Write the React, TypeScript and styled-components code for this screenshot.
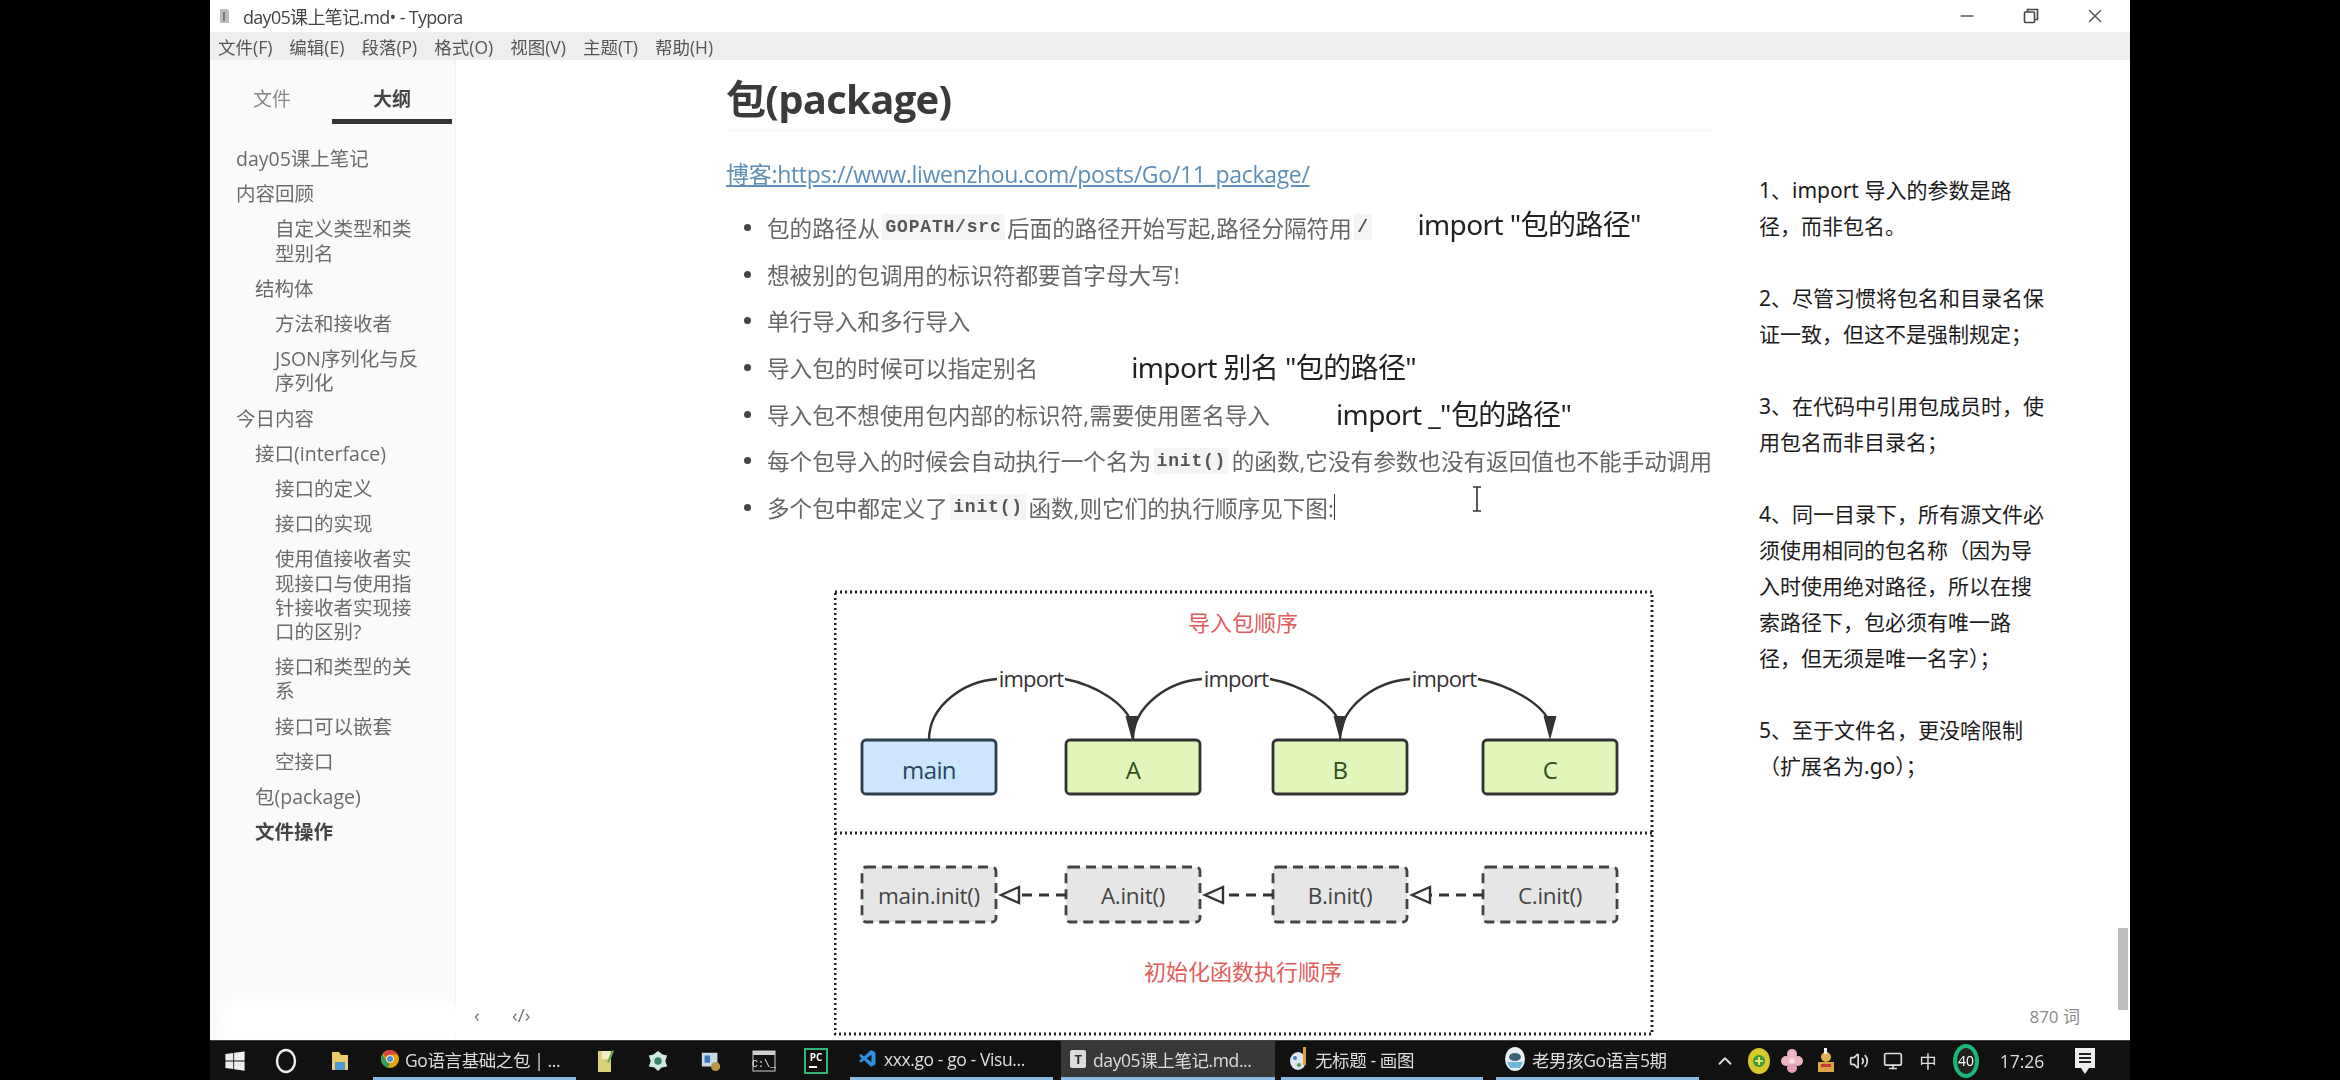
import React from "react";
import styled, { createGlobalStyle } from "styled-components";
import { X, Minus, ChevronUp, Volume2, Monitor } from "lucide-react";
import { FaWindows } from "react-icons/fa";
import { VscVscode } from "react-icons/vsc";

const Global = createGlobalStyle`
  html, body { margin: 0; background: #000; overflow: hidden; }
  * { box-sizing: border-box; }
`;
const sans = `"Open Sans", "Noto Sans CJK SC", sans-serif`;
const yahei = `"Noto Sans", "Noto Sans CJK SC", sans-serif`;

const Page = styled.div`
  width: 2340px; height: 1080px; background: #000; padding-left: 210px;
`;
const Desktop = styled.div`
  width: 1920px; height: 1080px; display: flex; flex-direction: column;
`;
const Win = styled.div`
  height: 1040px; background: #fff; display: flex; flex-direction: column; position: relative; overflow: hidden;
`;
const TitleBar = styled.div`
  height: 32px; flex: none; display: flex; align-items: center; padding-left: 8px;
  font: 18px ${sans}; color: #444; filter: blur(.5px);
`;
const DocIcon = styled.svg` width: 12px; height: 16px; margin-right: 13px; `;
const TitleText = styled.div` flex: 1; letter-spacing: -.7px; `;
const Ctrl = styled.div`
  width: 64px; display: flex; justify-content: center; align-items: center; color: #555;
`;
const ControlGroup = styled.div` display: flex; margin-right: 3px; `;
const MenuBar = styled.div`
  height: 28px; flex: none; background: #eeeeee; display: flex; align-items: center; gap: 17px; padding-left: 8px;
  font: 17.5px ${sans}; color: #555; filter: blur(.5px);
`;
const MenuItem = styled.span` white-space: nowrap; `;
const Body = styled.div` flex: 1; display: flex; min-height: 0; `;
const Sidebar = styled.aside`
  width: 246px; flex: none; background: #fafafa; border-right: 1px solid #eeeeee; filter: blur(.5px);
`;
const Tabs = styled.div` display: flex; height: 64px; padding-left: 2px; `;
const Tab = styled.div<{ $active?: boolean }>`
  width: 120px; padding-top: 17px; display: flex; justify-content: center; align-items: center;
  font: 19px ${sans}; color: ${p => (p.$active ? "#444" : "#888")};
  font-weight: ${p => (p.$active ? 600 : 400)};
  border-bottom: 5px solid ${p => (p.$active ? "#333" : "transparent")};
`;
const Outline = styled.div` display: flex; flex-direction: column; gap: 11px; padding-top: 23px; `;
const OutlineItem = styled.div<{ $level: number; $bold?: boolean }>`
  margin-left: ${p => [26, 45, 65][p.$level]}px;
  width: ${p => (p.$level === 2 ? "150px" : "190px")};
  font: ${p => (p.$bold ? 700 : 400)} 19.5px/24.2px ${sans};
  color: ${p => (p.$bold ? "#444" : "#6b6b6b")};
  word-break: break-all;
`;
const Editor = styled.main` flex: 1; display: flex; position: relative; min-width: 0; `;
const Article = styled.article`
  width: 1303px; flex: none; padding: 9px 0 0 270px; filter: blur(.55px);
`;
const Heading = styled.h1`
  margin: 0; height: 62px; font: 700 40px/60px ${sans}; color: #3a3a3a; letter-spacing: -.7px;
  border-bottom: 1px solid #f6f6f6; width: 990px;
`;
const Blog = styled.a`
  display: block; margin-top: 28px; height: 30px; font: 23px/30px ${sans}; color: #5f8fb8;
  text-decoration: underline; letter-spacing: -.3px; white-space: nowrap;
`;
const List = styled.ul` list-style: none; margin: 15px 0 0; padding: 0; `;
const Item = styled.li`
  height: 46.7px; display: flex; align-items: center; position: relative; padding-left: 41px;
  font: 22.6px ${sans}; color: #666; white-space: nowrap;
`;
const Dot = styled.span`
  position: absolute; left: 18px; top: 20px; width: 7px; height: 7px; border-radius: 50%; background: #444;
`;
const Code = styled.code`
  font: 600 18px "Liberation Mono", monospace; background: #f3f4f4; color: #555; padding: 3px 3px; margin: 0 2.5px; letter-spacing: .8px;
`;
const Caret = styled.span` display: inline-block; width: 1.5px; height: 26px; background: #333; vertical-align: middle; `;
const Annotation = styled.span<{ $gap: number; $lift: number }>`
  margin-left: ${p => p.$gap}px; margin-bottom: ${p => p.$lift}px; font: 28px ${yahei}; color: #222; letter-spacing: -.6px;
`;
const DiagramBox = styled.svg` display: block; margin: 58px 0 0 108px; width: 820px; height: 448px; `;
const Notes = styled.aside`
  flex: none; width: 300px; padding-top: 112px; display: flex; flex-direction: column; gap: 36px;
  font: 21px/36px ${yahei}; color: #1c1c1c;
`;
const Para = styled.p` margin: 0; white-space: nowrap; `;
const WordCount = styled.div`
  position: absolute; right: 50px; bottom: 12px; font: 17px ${sans}; color: #8a8a8a;
`;
const ScrollThumb = styled.div`
  position: absolute; right: 2px; top: 868px; width: 10px; height: 82px; background: #bdbdbd;
`;
const FooterGlyph = styled.span<{ $x: number }>`
  position: absolute; left: ${p => p.$x}px; bottom: 12px; font: 19px ${sans}; color: #777; z-index: 2;
`;
const MouseBeam = styled.svg` position: absolute; left: 1016px; top: 426px; width: 10px; height: 26px; `;
const Watermark = styled.div`
  position: absolute; left: 15px; bottom: 0; width: 240px; height: 36px; background: #fff; filter: blur(7px);
`;
const Taskbar = styled.footer`
  height: 40px; flex: none; background: #111; display: flex; align-items: stretch; filter: blur(.4px);
  font: 17.5px ${sans}; color: #ddd; border-top: 1px solid #444;
`;
const Slot = styled.div<{ $w: number; $ml?: number }>`
  width: ${p => p.$w}px; margin-left: ${p => p.$ml ?? 0}px; flex: none; display: flex; align-items: center; justify-content: center;
`;
const TaskTab = styled.div<{ $w: number; $ml: number; $active?: boolean }>`
  width: ${p => p.$w}px; margin-left: ${p => p.$ml}px; flex: none; display: flex; align-items: center; gap: 6px;
  padding-left: 8px; white-space: nowrap; letter-spacing: -.4px; border-bottom: 3px solid #8abbe4;
  background: ${p => (p.$active ? "#383838" : "transparent")};
`;
const Tray = styled.div` display: flex; align-items: stretch; margin-left: 8px; `;
const Clock = styled.span` font: 17.5px ${sans}; color: #ddd; `;
const Badge = styled.div`
  width: 26px; height: 34px; border-radius: 50%; border: 4px solid #18b878; color: #fff; background: #222;
  font: 14px ${sans}; display: flex; align-items: center; justify-content: center;
`;

const outline: [number, string, boolean?][] = [
  [0, "day05课上笔记"], [0, "内容回顾"], [2, "自定义类型和类型别名"], [1, "结构体"], [2, "方法和接收者"],
  [2, "JSON序列化与反序列化"], [0, "今日内容"], [1, "接口(interface)"], [2, "接口的定义"], [2, "接口的实现"],
  [2, "使用值接收者实现接口与使用指针接收者实现接口的区别?"], [2, "接口和类型的关系"], [2, "接口可以嵌套"], [2, "空接口"],
  [1, "包(package)"], [1, "文件操作", true],
];
const menus = ["文件(F)", "编辑(E)", "段落(P)", "格式(O)", "视图(V)", "主题(T)", "帮助(H)"];
const notes = [
  ["1、import 导入的参数是路", "径，而非包名。"],
  ["2、尽管习惯将包名和目录名保", "证一致，但这不是强制规定；"],
  ["3、在代码中引用包成员时，使", "用包名而非目录名；"],
  ["4、同一目录下，所有源文件必", "须使用相同的包名称（因为导", "入时使用绝对路径，所以在搜", "索路径下，包必须有唯一路", "径，但无须是唯一名字）；"],
  ["5、至于文件名，更没啥限制", "（扩展名为.go）；"],
];

const boxes = [
  { x: 862, label: "main", fill: "#cde5fd", stroke: "#2b3f50", ink: "#25485f" },
  { x: 1066, label: "A", fill: "#e2f5bb", stroke: "#333", ink: "#2c4f22" },
  { x: 1273, label: "B", fill: "#e2f5bb", stroke: "#333", ink: "#2c4f22" },
  { x: 1483, label: "C", fill: "#e2f5bb", stroke: "#333", ink: "#2c4f22" },
];
const inits = [
  { x: 862, label: "main.init()" }, { x: 1066, label: "A.init()" },
  { x: 1273, label: "B.init()" }, { x: 1483, label: "C.init()" },
];
const arcs = [
  { from: 929, to: 1132, label: 1031 },
  { from: 1133, to: 1340, label: 1236 },
  { from: 1340, to: 1550, label: 1444 },
];

const Diagram = () => (
  <DiagramBox viewBox="834 590 820 448" fontFamily={`"Open Sans", "Noto Sans CJK SC", sans-serif`}>
    <rect x={835} y={593} width={817} height={442} fill="#fff" stroke="#222" strokeWidth={3} strokeDasharray="2 3" />
    <line x1={835} y1={834} x2={1652} y2={834} stroke="#222" strokeWidth={3} strokeDasharray="2 3" />
    <text x={1243} y={632} textAnchor="middle" fontSize={22} fill="#e25c5c">导入包顺序</text>
    <text x={1243} y={981} textAnchor="middle" fontSize={22} fill="#e25c5c">初始化函数执行顺序</text>
    {arcs.map(a => (
      <g key={a.label}>
        <path d={`M${a.from} 741 C${a.from} 705 ${a.label - 65} 682 ${a.label - 34} 680`} fill="none" stroke="#333" strokeWidth={2.4} />
        <path d={`M${a.label + 34} 680 C${a.label + 65} 686 ${a.to - 6} 705 ${a.to} 725`} fill="none" stroke="#333" strokeWidth={2.4} />
        <polygon points={`${a.to},741 ${a.to - 6.5},717 ${a.to + 6.5},717`} fill="#333" />
        <text x={a.label} y={688} textAnchor="middle" fontSize={22} fill="#333" letterSpacing={-0.8}>import</text>
      </g>
    ))}
    {boxes.map(b => (
      <g key={b.label}>
        <rect x={b.x} y={741} width={134} height={54} rx={4} fill={b.fill} stroke={b.stroke} strokeWidth={2.8} />
        <text x={b.x + 67} y={780} textAnchor="middle" fontSize={24} fill={b.ink} letterSpacing={-0.6}>{b.label}</text>
      </g>
    ))}
    {inits.map((b, i) => (
      <g key={b.label}>
        <rect x={b.x} y={868} width={134} height={55} rx={4} fill="#e6e6e6" stroke="#444" strokeWidth={2.8} strokeDasharray="10 6" />
        <text x={b.x + 67} y={905} textAnchor="middle" fontSize={22.5} fill="#444" letterSpacing={-0.3}>{b.label}</text>
        {i > 0 && (
          <g>
            <line x1={b.x} y1={896} x2={inits[i - 1].x + 154} y2={896} stroke="#333" strokeWidth={2.8} strokeDasharray="10 7" />
            <polygon points={`${inits[i - 1].x + 139},896 ${inits[i - 1].x + 157},888 ${inits[i - 1].x + 157},904`} fill="#fff" stroke="#333" strokeWidth={2.4} />
          </g>
        )}
      </g>
    ))}
  </DiagramBox>
);

const ChromeIcon = () => (
  <svg width="18" height="18" viewBox="0 0 24 24">
    <circle cx="12" cy="12" r="12" fill="#e5a50a" />
    <path d="M12 0a12 12 0 0 1 10.4 6H12a6 6 0 0 0-5.5 3.6L2.4 4.4A12 12 0 0 1 12 0z" fill="#d9453a" />
    <path d="M1.9 5.5l5 7.6a6 6 0 0 0 5.6 5L9.2 23.7A12 12 0 0 1 1.9 5.5z" fill="#3b9e4e" />
    <circle cx="12" cy="12" r="5" fill="#fff" /><circle cx="12" cy="12" r="4" fill="#4a8de0" />
  </svg>
);
const Folder = () => (
  <svg width="20" height="24" viewBox="0 0 20 24">
    <path d="M2 3h7l2 3h7v15H2z" fill="#eccb6a" /><rect x="5" y="13" width="10" height="8" fill="#4a9ad8" />
  </svg>
);
const Notepad = () => (
  <svg width="20" height="26" viewBox="0 0 20 26">
    <rect x="3" y="3" width="13" height="21" fill="#d9d27a" /><path d="M7 3h9v8H7z" fill="#f2efc8" /><path d="M17 2l2 1-5 12-2-1z" fill="#6aa84f" />
  </svg>
);
const Gem = () => (
  <svg width="22" height="24" viewBox="0 0 24 24">
    <path d="M12 1l5 4 5 1-2 6 2 6-6 1-4 4-4-4-6-1 2-6-2-6 5-1z" fill="#cfe9df" /><circle cx="12" cy="12" r="4" fill="#35806e" />
  </svg>
);
const Utility = () => (
  <svg width="22" height="24" viewBox="0 0 24 24">
    <rect x="2" y="3" width="17" height="15" fill="#c9d8e6" /><rect x="5" y="6" width="6" height="8" fill="#3c78b5" /><circle cx="17" cy="18" r="5" fill="#b8964a" />
  </svg>
);
const Cmd = () => (
  <svg width="24" height="24" viewBox="0 0 24 24" fontFamily="Liberation Mono">
    <rect x="1" y="2" width="22" height="20" fill="#111" stroke="#cfcfcf" /><rect x="1" y="2" width="22" height="4" fill="#cfcfcf" />
    <text x="12" y="18" fontSize="10" fill="#eee" textAnchor="middle">C:\_</text>
  </svg>
);
const PyCharm = () => (
  <svg width="24" height="26" viewBox="0 0 24 26" fontFamily="Open Sans">
    <rect x="1" y="1" width="22" height="24" fill="#111" stroke="#2fb574" strokeWidth="2" />
    <text x="12" y="13" fontSize="10" fontWeight="700" fill="#fff" textAnchor="middle">PC</text><rect x="5" y="18" width="8" height="2" fill="#fff" />
  </svg>
);
const TyporaIcon = () => (
  <svg width="18" height="20" viewBox="0 0 18 20" fontFamily="Open Sans">
    <rect x="1" y="1" width="16" height="18" rx="2" fill="#dcdcdc" /><text x="9" y="15" fontSize="13" fontWeight="700" fill="#333" textAnchor="middle">T</text>
  </svg>
);
const PaintIcon = () => (
  <svg width="20" height="26" viewBox="0 0 20 26">
    <ellipse cx="9" cy="15" rx="8" ry="9" fill="#dbe6ef" /><circle cx="6" cy="12" r="2" fill="#3a7fc4" /><circle cx="10" cy="19" r="2" fill="#4c9c55" />
    <rect x="14" y="1" width="3" height="18" fill="#e29b3c" />
  </svg>
);
const ObsIcon = () => (
  <svg width="22" height="26" viewBox="0 0 22 26">
    <ellipse cx="11" cy="13" rx="10" ry="12" fill="#e8f0f4" /><ellipse cx="11" cy="11" rx="6" ry="4" fill="#3f5f72" /><path d="M3 16h16l-3 6H6z" fill="#6db7dd" />
  </svg>
);
const Shield = () => (
  <svg width="24" height="28" viewBox="0 0 24 28">
    <ellipse cx="12" cy="14" rx="11" ry="13" fill="#d7c92a" /><circle cx="12" cy="14" r="6" fill="#3c9a3c" /><path d="M12 10v8M8 14h8" stroke="#e9e36a" strokeWidth="2" />
  </svg>
);
const Flower = () => (
  <svg width="22" height="26" viewBox="0 0 22 26">
    <circle cx="11" cy="6" r="5" fill="#eeb4c2" /><circle cx="5" cy="13" r="5" fill="#eeb4c2" /><circle cx="17" cy="13" r="5" fill="#eeb4c2" /><circle cx="11" cy="20" r="5" fill="#e8a0b2" /><circle cx="11" cy="13" r="3" fill="#f7dce2" />
  </svg>
);
const Squirrel = () => (
  <svg width="22" height="26" viewBox="0 0 22 26">
    <rect x="3" y="14" width="16" height="10" fill="#d9a441" /><circle cx="11" cy="9" r="5" fill="#e2b04f" /><path d="M9 0h3v6H9z" fill="#eee" /><rect x="6" y="16" width="10" height="3" fill="#c6372d" />
  </svg>
);
const Notification = () => (
  <svg width="24" height="30" viewBox="0 0 24 30">
    <path d="M2 2h20v20h-6l-4 6-4-6H2z" fill="#eee" /><path d="M6 8h12M6 12h12M6 16h12" stroke="#222" strokeWidth="2" />
  </svg>
);

export default function App() {
  return (
    <Page>
      <Global />
      <Desktop>
        <Win>
          <TitleBar>
            <DocIcon viewBox="0 0 12 16"><path d="M2 1h7l2 2v12H2z" fill="#bbb" /><path d="M5 4h2v9H5z" fill="#777" /></DocIcon>
            <TitleText>day05课上笔记.md• - Typora</TitleText>
            <ControlGroup>
              <Ctrl><Minus size={20} strokeWidth={2} /></Ctrl>
              <Ctrl>
                <svg width="16" height="16" viewBox="0 0 16 16" fill="none" stroke="#444" strokeWidth="1.6">
                  <rect x="1.5" y="4" width="10" height="10.5" rx="1" /><path d="M4.5 4V1.5h10v10H11.5" />
                </svg>
              </Ctrl>
              <Ctrl><X size={22} strokeWidth={1.6} /></Ctrl>
            </ControlGroup>
          </TitleBar>
          <MenuBar>{menus.map(m => <MenuItem key={m}>{m}</MenuItem>)}</MenuBar>
          <Body>
            <Sidebar>
              <Tabs><Tab>文件</Tab><Tab $active>大纲</Tab></Tabs>
              <Outline>
                {outline.map(([lvl, text, bold]) => (
                  <OutlineItem key={text} $level={lvl} $bold={bold}>{text}</OutlineItem>
                ))}
              </Outline>
            </Sidebar>
            <Editor>
              <Article>
                <Heading>包(package)</Heading>
                <Blog>博客:https://www.liwenzhou.com/posts/Go/11_package/</Blog>
                <List>
                  <Item><Dot />包的路径从<Code>GOPATH/src</Code>后面的路径开始写起,路径分隔符用<Code>/</Code><Annotation $gap={43} $lift={8}>import "包的路径"</Annotation></Item>
                  <Item><Dot />想被别的包调用的标识符都要首字母大写!</Item>
                  <Item><Dot />单行导入和多行导入</Item>
                  <Item><Dot />导入包的时候可以指定别名<Annotation $gap={93} $lift={2}>import 别名 "包的路径"</Annotation></Item>
                  <Item><Dot />导入包不想使用包内部的标识符,需要使用匿名导入<Annotation $gap={66} $lift={2}>import _"包的路径"</Annotation></Item>
                  <Item><Dot />每个包导入的时候会自动执行一个名为<Code>init()</Code>的函数,它没有参数也没有返回值也不能手动调用</Item>
                  <Item><Dot />多个包中都定义了<Code>init()</Code>函数,则它们的执行顺序见下图:<Caret /></Item>
                </List>
                <Diagram />
              </Article>
              <Notes>
                {notes.map(lines => (
                  <Para key={lines[0]}>{lines.map(l => <React.Fragment key={l}>{l}<br /></React.Fragment>)}</Para>
                ))}
              </Notes>
              <FooterGlyph $x={18}>‹</FooterGlyph>
              <FooterGlyph $x={56}>‹/›</FooterGlyph>
              <WordCount>870 词</WordCount>
              <ScrollThumb />
              <MouseBeam viewBox="0 0 10 26"><path d="M1 1h8M5 1v24M1 25h8" stroke="#333" strokeWidth="1.6" fill="none" /></MouseBeam>
            </Editor>
          </Body>
          <Watermark />
        </Win>
        <Taskbar>
          <Slot $w={50}><FaWindows size={22} color="#eee" /></Slot>
          <Slot $w={52}><svg width="22" height="26" viewBox="0 0 22 26"><ellipse cx="11" cy="13" rx="9" ry="11" fill="none" stroke="#eee" strokeWidth="2.4" /></svg></Slot>
          <Slot $w={56}><Folder /></Slot>
          <TaskTab $w={203} $ml={5}><ChromeIcon />Go语言基础之包 | ...</TaskTab>
          <Slot $w={52} $ml={3}><Notepad /></Slot>
          <Slot $w={53}><Gem /></Slot>
          <Slot $w={54}><Utility /></Slot>
          <Slot $w={52}><Cmd /></Slot>
          <Slot $w={52}><PyCharm /></Slot>
          <TaskTab $w={203} $ml={8}><VscVscode size={20} color="#2f8fe0" />xxx.go - go - Visu...</TaskTab>
          <TaskTab $w={214} $ml={8} $active><TyporaIcon />day05课上笔记.md...</TaskTab>
          <TaskTab $w={202} $ml={6}><PaintIcon />无标题 - 画图</TaskTab>
          <TaskTab $w={203} $ml={13}><ObsIcon />老男孩Go语言5期</TaskTab>
          <Tray>
            <Slot $w={36}><ChevronUp size={22} color="#ddd" /></Slot>
            <Slot $w={32}><Shield /></Slot>
            <Slot $w={34}><Flower /></Slot>
            <Slot $w={34}><Squirrel /></Slot>
            <Slot $w={32}><Volume2 size={20} color="#ddd" /></Slot>
            <Slot $w={36}><Monitor size={20} color="#ddd" /></Slot>
            <Slot $w={34}>中</Slot>
            <Slot $w={42}><Badge>40</Badge></Slot>
            <Slot $w={70}><Clock>17:26</Clock></Slot>
            <Slot $w={56}><Notification /></Slot>
          </Tray>
        </Taskbar>
      </Desktop>
    </Page>
  );
}
